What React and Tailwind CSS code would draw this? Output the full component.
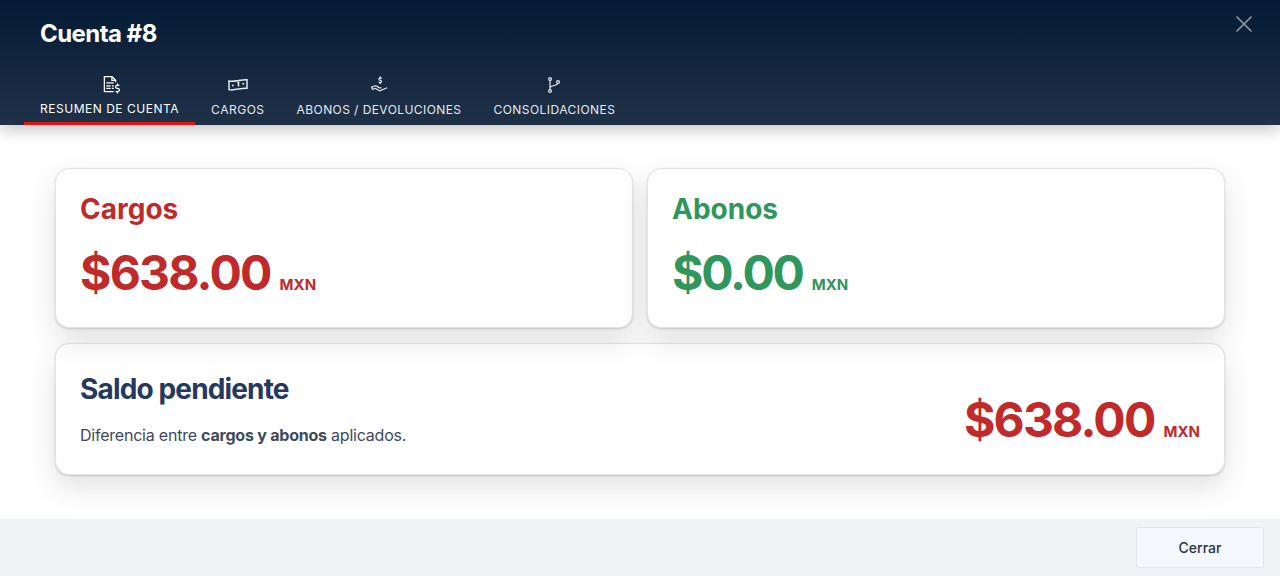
import { LiaFileInvoiceDollarSolid, LiaHandHoldingUsdSolid } from 'react-icons/lia';
import { X } from 'lucide-react';

const BillIcon = ({ className }) => (
  <svg viewBox="0 0 20 20" fill="none" stroke="currentColor" strokeWidth="1.5" className={className}>
    <path d="M1 7c5 1.600 12.500-2 18-1.300v8.600c-5.500-.8-13 2.800-18 1.300z" />
    <path d="M9.400 9l1.100-.6v4" />
    <circle cx="4.800" cy="11.500" r="1" fill="currentColor" stroke="none" />
    <circle cx="15.200" cy="9.800" r="1" fill="currentColor" stroke="none" />
  </svg>
);

const BranchIcon = ({ className }) => (
  <svg viewBox="0 0 20 20" fill="none" stroke="currentColor" strokeWidth="1.2" className={className}>
    <circle cx="6" cy="5" r="1.400" />
    <circle cx="6" cy="17" r="1.400" />
    <circle cx="14" cy="8" r="1.400" />
    <path d="M6 6.400v9.200" />
    <path d="M6 13.500c0-2 7-1.500 8-4.100" />
  </svg>
);

const tabs = [
  { label: 'RESUMEN DE CUENTA', icon: LiaFileInvoiceDollarSolid, active: true, tracking: 'tracking-[0.52px]' },
  { label: 'CARGOS', icon: BillIcon, tracking: 'tracking-[0.52px]' },
  { label: 'ABONOS / DEVOLUCIONES', icon: LiaHandHoldingUsdSolid, tracking: 'tracking-[0.42px]' },
  { label: 'CONSOLIDACIONES', icon: BranchIcon, tracking: 'tracking-[0.46px]' },
];

const Amount = ({ value, color, tracking = 'tracking-[-1.8px]' }) => (
  <div className={`flex items-baseline gap-[9px] font-bold ${color}`}>
    <span className={`text-[48px] leading-[56px] ${tracking}`}>{value}</span>
    <span className="text-[15px] leading-6">MXN</span>
  </div>
);

const cardClass = 'rounded-[14px] border border-[#e2e4e8] bg-white shadow-[0_1px_2px_rgba(0,0,0,0.15),0_12px_30px_rgba(0,0,0,0.12)]';

const App = () => {
  return (
    <div className="flex flex-col h-[576px] w-[1280px] overflow-hidden bg-white font-['Inter',sans-serif]">
      {/* Header */}
      <header className="relative z-10 h-[125px] shrink-0 bg-gradient-to-b from-[#051a34] to-[#1f3147] shadow-[0_4px_16px_rgba(0,0,0,0.25)]">
        <h1 className="pl-10 pt-[18px] text-2xl leading-[32px] font-bold tracking-[-0.55px] text-white">Cuenta #8</h1>
        <button className="absolute top-[10px] right-[22px] text-[#8b95a5]">
          <X className="w-[28px] h-[28px]" strokeWidth={1.5} />
        </button>
        <nav className="flex pl-6 mt-[24px]">
          {tabs.map((tab) => (
            <div
              key={tab.label}
              className={`flex flex-col items-center h-[51px] px-4 ${tab.active ? 'border-b-[3px] border-[#e11414] text-white' : 'text-[#e6e9ee]'}`}
            >
              <tab.icon className="w-[20px] h-[20px]" />
              <span className={`text-xs leading-4 font-normal ${tab.tracking} ${tab.active ? 'mt-[7px]' : 'mt-[8px]'}`}>{tab.label}</span>
            </div>
          ))}
        </nav>
      </header>

      {/* Body */}
      <main className="flex-1 px-[55px] pt-[43px]">
        <div className="grid grid-cols-2 gap-[14px]">
          <section className={`h-[160px] px-6 pt-[22px] ${cardClass}`}>
            <h2 className="text-[28px] leading-[36px] font-bold text-[#c02a2a]">Cargos</h2>
            <div className="mt-[18px]"><Amount value="$638.00" color="text-[#c02a2a]" /></div>
          </section>
          <section className={`h-[160px] px-6 pt-[22px] ${cardClass}`}>
            <h2 className="text-[28px] leading-[36px] font-bold text-[#2f965c]">Abonos</h2>
            <div className="mt-[18px]"><Amount value="$0.00" color="text-[#2f965c]" tracking="tracking-[-2.2px]" /></div>
          </section>
        </div>
        <section className={`flex items-center justify-between h-[132px] mt-[15px] px-6 ${cardClass}`}>
          <div>
            <h2 className="text-[28px] leading-[36px] font-bold tracking-[-0.85px] text-[#25395c]">Saldo pendiente</h2>
            <p className="mt-[16px] text-base leading-6 tracking-[-0.22px] text-[#3d4a5c]">
              Diferencia entre <strong className="font-bold">cargos y abonos</strong> aplicados.
            </p>
          </div>
          <div className="mt-[21px]"><Amount value="$638.00" color="text-[#c02a2a]" /></div>
        </section>
      </main>

      {/* Footer */}
      <footer className="flex justify-end h-[57px] shrink-0 pt-2 pr-4 bg-[#f0f2f6]">
        <button className="w-[128px] h-[41px] rounded-[2px] border border-[#e2e5ea] bg-[#f5f8fc] text-sm font-medium text-[#2a3342]">
          Cerrar
        </button>
      </footer>
    </div>
  );
};

export default App;
